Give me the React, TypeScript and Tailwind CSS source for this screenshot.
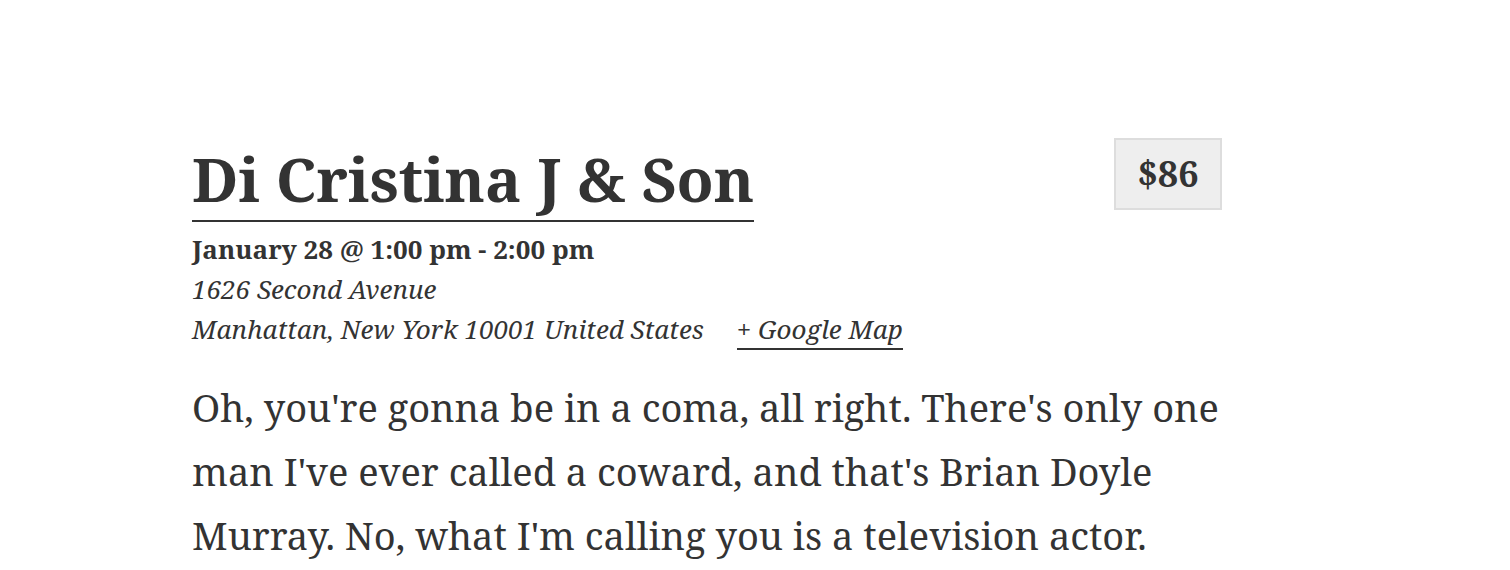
import React from "react";

export default function App() {
  return (
    <div className="min-h-[570px] w-full bg-white text-[#333]">
      <div className="ml-[192px] w-[1030px] pt-[138px] font-['Noto_Serif','DejaVu_Serif',serif]">
        <div className="flex items-start justify-between">
          <h1 className="mt-[6px] text-[60.7px] font-bold leading-[70px]">
            <a className="border-b-2 border-[#333]">Di Cristina J &amp; Son</a>
          </h1>
          <div className="flex h-[72px] w-[108px] items-center justify-center border-2 border-[#ddd] bg-[#eee] text-[36px] font-bold">
            $86
          </div>
        </div>
        <div className="mt-[15px] text-[26px] leading-[40px]">
          <div className="font-bold">January 28 @ 1:00 pm - 2:00 pm</div>
          <div className="italic">1626 Second Avenue</div>
          <div className="italic">
            Manhattan, New York 10001 United States
            <a className="ml-[33px] border-b-2 border-[#333] pb-[1px]">+ Google Map</a>
          </div>
        </div>
        <p className="mt-[26px] text-[38px] leading-[64px]">
          Oh, you're gonna be in a coma, all right. There's only one
          <br />
          man I've ever called a coward, and that's Brian Doyle
          <br />
          Murray. No, what I'm calling you is a television actor.
        </p>
      </div>
    </div>
  );
}
